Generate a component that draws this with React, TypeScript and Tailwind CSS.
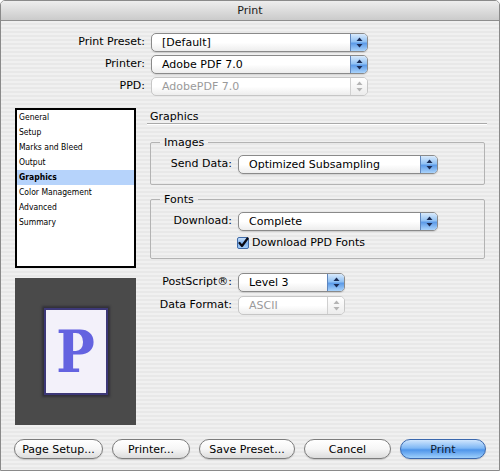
import React from "react";

const stripe =
  "bg-[repeating-linear-gradient(180deg,#f0f0f0_0px,#f0f0f0_2px,#e8e8e8_2px,#e8e8e8_4px)]";

function Arrows({ disabled }: { disabled?: boolean }) {
  const c = disabled ? "#b4b4b4" : "#1b2c55";
  return (
    <svg width="7" height="11" viewBox="0 0 7 11">
      <path d="M3.5 0.5 L6.5 4 L0.5 4 Z" fill={c} />
      <path d="M3.5 10.5 L6.5 7 L0.5 7 Z" fill={c} />
    </svg>
  );
}

function Popup({
  text,
  className,
  disabled,
}: {
  text: string;
  className: string;
  disabled?: boolean;
}) {
  return (
    <div
      className={`flex h-[19px] items-stretch overflow-hidden rounded-[5px] border ${
        disabled
          ? "border-[#c6c6c6] text-[#9a9a9a]"
          : "border-[#8a8a8a] text-black shadow-[0_1px_1px_rgba(0,0,0,0.12)]"
      } bg-gradient-to-b from-white via-white to-[#ededed] ${className}`}
    >
      <div className="flex flex-1 items-center pl-[10px] leading-none whitespace-nowrap">
        {text}
      </div>
      <div
        className={`flex w-[17px] items-center justify-center border-l ${
          disabled
            ? "border-[#d0d0d0] bg-gradient-to-b from-white to-[#ececec]"
            : "border-[#5f86bd] bg-[linear-gradient(180deg,#d9eafc_0%,#92c2f4_45%,#5d9be8_55%,#aad3fb_100%)]"
        }`}
      >
        <Arrows disabled={disabled} />
      </div>
    </div>
  );
}

function Button({
  label,
  className,
  primary,
}: {
  label: string;
  className: string;
  primary?: boolean;
}) {
  return (
    <div
      className={`flex h-[20px] items-center justify-center rounded-full border leading-none ${
        primary
          ? "border-[#3b68ad] bg-[linear-gradient(180deg,#cfe5fd_0%,#7fb8f5_45%,#4f95ea_55%,#9fd0fc_100%)] text-[#0d1a33]"
          : "border-[#7c7c7c] bg-gradient-to-b from-white via-[#f6f6f6] to-[#dcdcdc] text-black"
      } shadow-[0_1px_1px_rgba(0,0,0,0.15)] ${className}`}
    >
      {label}
    </div>
  );
}

function Checkbox() {
  return (
    <svg width="12" height="12" viewBox="0 0 12 12">
      <defs>
        <linearGradient id="cb" x1="0" y1="0" x2="0" y2="1">
          <stop offset="0" stopColor="#cfe4fb" />
          <stop offset="0.5" stopColor="#7fb2ee" />
          <stop offset="1" stopColor="#a8d0fa" />
        </linearGradient>
      </defs>
      <rect x="0.5" y="0.5" width="11" height="11" rx="1.5" fill="url(#cb)" stroke="#3f6aa8" />
      <path d="M2.5 6 L5 9 L10.5 1.5" fill="none" stroke="#0a0a14" strokeWidth="2.2" strokeLinecap="round" strokeLinejoin="round" />
    </svg>
  );
}

const items = [
  "General",
  "Setup",
  "Marks and Bleed",
  "Output",
  "Graphics",
  "Color Management",
  "Advanced",
  "Summary",
];

export default function App() {
  return (
    <div className="h-[471px] w-[500px] bg-white">
      <div className="flex h-[471px] w-[500px] flex-col overflow-hidden rounded-t-[5px] border border-[#8a8a8a] font-['DejaVu_Sans',sans-serif] text-[11px] text-black">
        {/* Title bar */}
        <div className="flex h-[20px] shrink-0 items-center justify-center border-b border-[#8e8e8e] bg-gradient-to-b from-[#eeeeee] to-[#cbcbcb] text-[11px] leading-none text-[#1a1a1a]">
          Print
        </div>

        {/* Body */}
        <div className={`flex flex-1 flex-col ${stripe}`}>
          {/* Top rows */}
          <div className="flex flex-col gap-[3px] pt-[12px]">
            <div className="flex items-center">
              <div className="w-[144px] text-right">Print Preset:</div>
              <Popup text="[Default]" className="ml-[6px] w-[217px]" />
            </div>
            <div className="flex items-center">
              <div className="w-[144px] text-right">Printer:</div>
              <Popup text="Adobe PDF 7.0" className="ml-[6px] w-[217px]" />
            </div>
            <div className="flex items-center">
              <div className="w-[144px] text-right">PPD:</div>
              <Popup text="AdobePDF 7.0" className="ml-[6px] w-[217px]" disabled />
            </div>
          </div>

          {/* Middle */}
          <div className="mt-[12px] flex pl-[14px]">
            {/* Left column */}
            <div className="flex w-[121px] flex-col">
              <div className="h-[160px] border-2 border-black bg-white font-['DejaVu_Sans_Condensed','Liberation_Sans',sans-serif] text-[8.5px]">
                {items.map((it) => (
                  <div
                    key={it}
                    className={`flex h-[15px] items-center pl-[2px] leading-none ${
                      it === "Graphics" ? "bg-[#b6d3fb] font-bold" : ""
                    }`}
                  >
                    {it}
                  </div>
                ))}
              </div>
              <div className="mt-[10px] flex h-[147px] items-center justify-center bg-[#4a4a4a]">
                <div className="flex h-[87px] w-[64px] items-center justify-center border-2 border-[#3d3878] bg-[#f3f1fa] shadow-[0_0_2px_2px_rgba(40,38,50,0.7)]">
                  <span className="font-['DejaVu_Serif_Condensed','DejaVu_Serif',serif] text-[57px] font-bold leading-none text-[#6463e0]">
                    P
                  </span>
                </div>
              </div>
            </div>

            {/* Right column */}
            <div className="ml-[11px] flex w-[340px] flex-col">
              <div className="h-[16px] border-b border-[#a9a9a9] pl-[3px] pt-[2px] leading-[13px] shadow-[0_1px_0_#ffffff]">
                Graphics
              </div>

              <fieldset className="mr-[2px] ml-[3px] mt-[12px] rounded-[2px] border border-[#b3b3b3] pb-[10px]">
                <legend className="ml-[9px] px-[4px] leading-[13px]">Images</legend>
                <div className="mt-[6px] flex items-center">
                  <div className="w-[81px] text-right">Send Data:</div>
                  <Popup text="Optimized Subsampling" className="ml-[6px] w-[200px]" />
                </div>
              </fieldset>

              <fieldset className="mr-[2px] ml-[3px] mt-[8px] rounded-[2px] border border-[#b3b3b3] pb-[9px]">
                <legend className="ml-[9px] px-[4px] leading-[13px]">Fonts</legend>
                <div className="mt-[6px] flex items-center">
                  <div className="w-[81px] text-right">Download:</div>
                  <Popup text="Complete" className="ml-[6px] w-[200px]" />
                </div>
                <div className="mt-[5px] flex h-[13px] items-center pl-[86px]">
                  <Checkbox />
                  <span className="ml-[3px] leading-none">Download PPD Fonts</span>
                </div>
              </fieldset>

              <div className="mt-[14px] flex flex-col gap-[4px]">
                <div className="flex items-center">
                  <div className="w-[85px] text-right">PostScript®:</div>
                  <Popup text="Level 3" className="ml-[6px] w-[107px]" />
                </div>
                <div className="flex items-center">
                  <div className="w-[85px] text-right">Data Format:</div>
                  <Popup text="ASCII" className="ml-[6px] w-[107px]" disabled />
                </div>
              </div>
            </div>
          </div>

          {/* Buttons */}
          <div className="mt-[14px] flex gap-[9px] pl-[13px]">
            <Button label="Page Setup..." className="w-[89px]" />
            <Button label="Printer..." className="w-[78px]" />
            <Button label="Save Preset..." className="w-[96px]" />
            <Button label="Cancel" className="w-[87px]" />
            <Button label="Print" className="w-[86px]" primary />
          </div>
        </div>
      </div>
    </div>
  );
}
